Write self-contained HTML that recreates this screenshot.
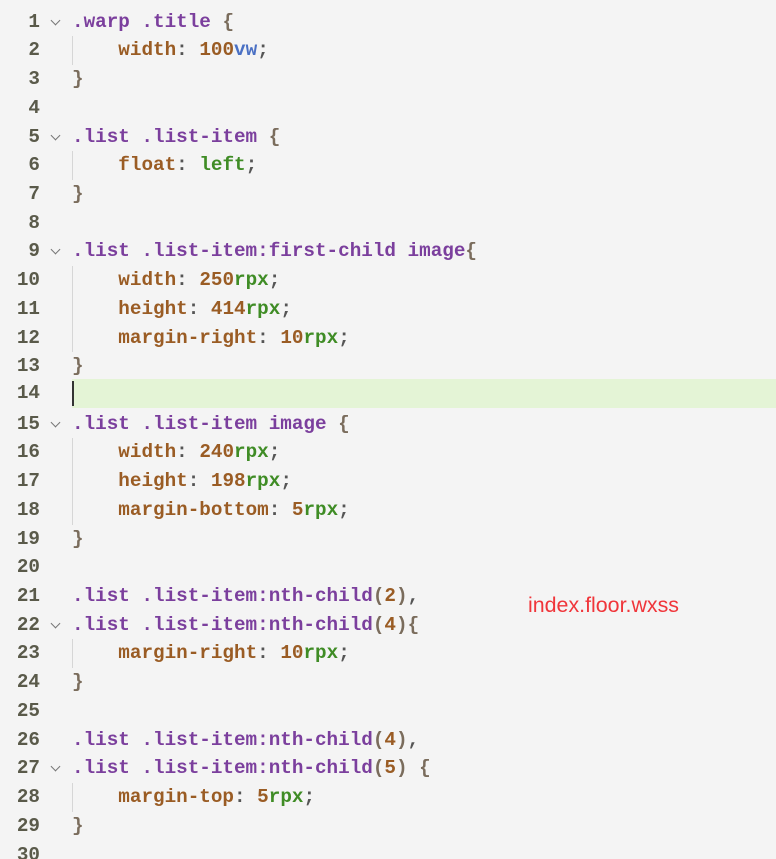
<!DOCTYPE html>
<html><head><meta charset="utf-8"><style>
html,body{margin:0;padding:0;background:#f4f4f4;width:776px;height:859px;overflow:hidden;position:relative}
#w{position:absolute;left:0;top:2px;width:776px;height:859px}
.l{position:absolute;left:0;width:776px;height:28.72px;line-height:28.72px;font-family:"Liberation Mono",monospace;font-size:19.3px;font-weight:bold;white-space:pre}
.n{position:absolute;left:0;width:40px;text-align:right;color:#5a5a4a}
.c{position:absolute;left:72px;}
.f{position:absolute;left:52px;top:9px;width:6px;height:6px;border-right:1.2px solid #777;border-bottom:1.2px solid #777;transform:rotate(45deg)}
.g{position:absolute;left:72px;top:0;width:1px;height:100%;background:#d6d6d6}
.s{color:#7b3f9d}.p{color:#9a5c24}.u{color:#3f8c25}.v{color:#4a70c4}.b{color:#7a6c5c}.o{color:#555}
.hl{background:#e4f4d6}
</style></head><body><div id="w">
<div class="l" style="top:5.6px"><span class="n">1</span><span class="f"></span><span class="c"><span class="s">.warp .title</span> <span class="b">{</span></span></div>
<div class="l" style="top:34.3px"><span class="n">2</span><span class="g"></span><span class="c">    <span class="p">width</span><span class="o">:</span> <span class="p">100</span><span class="v">vw</span><span class="o">;</span></span></div>
<div class="l" style="top:63px"><span class="n">3</span><span class="c"><span class="b">}</span></span></div>
<div class="l" style="top:91.8px"><span class="n">4</span></div>
<div class="l" style="top:120.5px"><span class="n">5</span><span class="f"></span><span class="c"><span class="s">.list .list-item</span> <span class="b">{</span></span></div>
<div class="l" style="top:149.2px"><span class="n">6</span><span class="g"></span><span class="c">    <span class="p">float</span><span class="o">:</span> <span class="u">left</span><span class="o">;</span></span></div>
<div class="l" style="top:177.9px"><span class="n">7</span><span class="c"><span class="b">}</span></span></div>
<div class="l" style="top:206.6px"><span class="n">8</span></div>
<div class="l" style="top:235.4px"><span class="n">9</span><span class="f"></span><span class="c"><span class="s">.list .list-item:first-child image</span><span class="b">{</span></span></div>
<div class="l" style="top:264.1px"><span class="n">10</span><span class="g"></span><span class="c">    <span class="p">width</span><span class="o">:</span> <span class="p">250</span><span class="u">rpx</span><span class="o">;</span></span></div>
<div class="l" style="top:292.8px"><span class="n">11</span><span class="g"></span><span class="c">    <span class="p">height</span><span class="o">:</span> <span class="p">414</span><span class="u">rpx</span><span class="o">;</span></span></div>
<div class="l" style="top:321.5px"><span class="n">12</span><span class="g"></span><span class="c">    <span class="p">margin-right</span><span class="o">:</span> <span class="p">10</span><span class="u">rpx</span><span class="o">;</span></span></div>
<div class="l" style="top:350.2px"><span class="n">13</span><span class="c"><span class="b">}</span></span></div>
<div class="l" style="top:377px"><span class="n">14</span><span class="hl" style="position:absolute;left:72px;right:0;top:0;bottom:0"></span><span style="position:absolute;left:72px;top:2px;width:2px;height:25px;background:#333"></span></div>
<div class="l" style="top:407.7px"><span class="n">15</span><span class="f"></span><span class="c"><span class="s">.list .list-item image</span> <span class="b">{</span></span></div>
<div class="l" style="top:436.4px"><span class="n">16</span><span class="g"></span><span class="c">    <span class="p">width</span><span class="o">:</span> <span class="p">240</span><span class="u">rpx</span><span class="o">;</span></span></div>
<div class="l" style="top:465.1px"><span class="n">17</span><span class="g"></span><span class="c">    <span class="p">height</span><span class="o">:</span> <span class="p">198</span><span class="u">rpx</span><span class="o">;</span></span></div>
<div class="l" style="top:493.8px"><span class="n">18</span><span class="g"></span><span class="c">    <span class="p">margin-bottom</span><span class="o">:</span> <span class="p">5</span><span class="u">rpx</span><span class="o">;</span></span></div>
<div class="l" style="top:522.6px"><span class="n">19</span><span class="c"><span class="b">}</span></span></div>
<div class="l" style="top:551.3px"><span class="n">20</span></div>
<div class="l" style="top:580px"><span class="n">21</span><span class="c"><span class="s">.list .list-item:nth-child</span><span class="b">(</span><span class="p">2</span><span class="b">)</span><span class="o">,</span></span></div>
<div class="l" style="top:608.7px"><span class="n">22</span><span class="f"></span><span class="c"><span class="s">.list .list-item:nth-child</span><span class="b">(</span><span class="p">4</span><span class="b">){</span></span></div>
<div class="l" style="top:637.4px"><span class="n">23</span><span class="g"></span><span class="c">    <span class="p">margin-right</span><span class="o">:</span> <span class="p">10</span><span class="u">rpx</span><span class="o">;</span></span></div>
<div class="l" style="top:666.2px"><span class="n">24</span><span class="c"><span class="b">}</span></span></div>
<div class="l" style="top:694.9px"><span class="n">25</span></div>
<div class="l" style="top:723.6px"><span class="n">26</span><span class="c"><span class="s">.list .list-item:nth-child</span><span class="b">(</span><span class="p">4</span><span class="b">)</span><span class="o">,</span></span></div>
<div class="l" style="top:752.3px"><span class="n">27</span><span class="f"></span><span class="c"><span class="s">.list .list-item:nth-child</span><span class="b">(</span><span class="p">5</span><span class="b">)</span> <span class="b">{</span></span></div>
<div class="l" style="top:781px"><span class="n">28</span><span class="g"></span><span class="c">    <span class="p">margin-top</span><span class="o">:</span> <span class="p">5</span><span class="u">rpx</span><span class="o">;</span></span></div>
<div class="l" style="top:809.8px"><span class="n">29</span><span class="c"><span class="b">}</span></span></div>
<div class="l" style="top:838.5px"><span class="n">30</span></div>
<div style="position:absolute;left:528px;top:590px;font-family:'Liberation Sans',sans-serif;font-size:21.4px;color:#f0353a;line-height:26px">index.floor.wxss</div>
</div></body></html>
